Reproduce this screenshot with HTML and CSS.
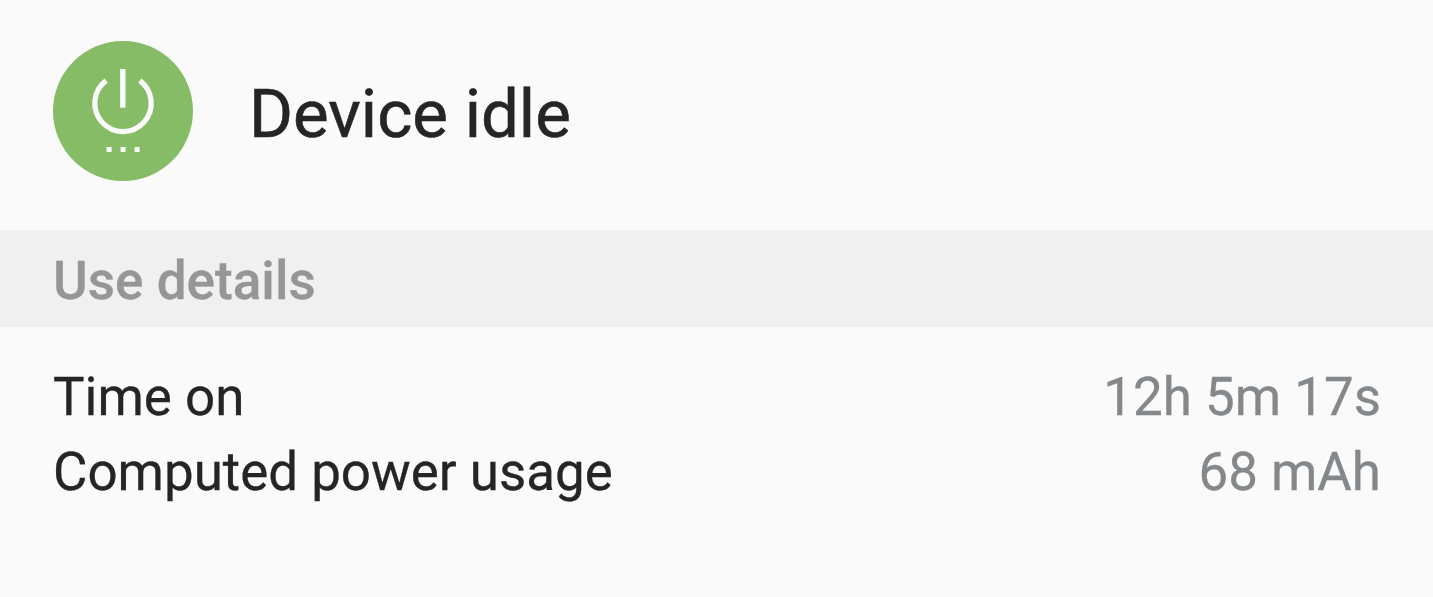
FILE: index.html
```
<!DOCTYPE html>
<html lang="en">
<head>
    <meta charset="UTF-8">
    <title>Device idle</title>
    <link rel="stylesheet" href="styles.css">
</head>
<body>
    <div class="header">
        <svg class="app-icon" viewBox="0 0 140 140">
            <circle cx="70" cy="70" r="70" fill="#87bc67"/>
            <path d="M53.2 39.7 A28.2 28.2 0 1 0 86.8 39.7" fill="none" stroke="#fafafa" stroke-width="5.2"/>
            <path d="M69.8 28 V66.7" stroke="#fafafa" stroke-width="5.4"/>
            <path d="M53.6 106h5v5h-5zM67.6 106h5v5h-5zM81.6 106h5v5h-5z" fill="#fafafa"/>
        </svg>
        <h1>Device idle</h1>
    </div>

    <h2 class="section-title">Use details</h2>

    <div class="details">
        <div class="row">
            <span>Time on</span>
            <span class="value">12h 5m 17s</span>
        </div>
        <div class="row">
            <span>Computed power usage</span>
            <span class="value">68 mAh</span>
        </div>
    </div>
</body>
</html>
```
FILE: styles.css
```
body {
    margin: 0;
    background: #fafafa;
    font-family: Roboto, sans-serif;
    color: #252525;
    -webkit-text-stroke: 0.3px;
}

.header {
    display: flex;
    align-items: center;
    box-sizing: border-box;
    height: 230px;
    padding: 0 53px 8px;
}

.app-icon {
    width: 140px;
    height: 140px;
    margin-right: 56px;
}

.header h1 {
    margin: 6px 0 0;
    font-size: 67.2px;
    font-weight: 400;
    line-height: 80px;
    -webkit-text-stroke: 0.6px;
}

/* Grey section bar */
.section-title {
    margin: 0;
    padding: 3px 53px 0;
    box-sizing: border-box;
    height: 97px;
    background: #f0f0f0;
    color: #969696;
    font-size: 53.1px;
    font-weight: 500;
    line-height: 97px;
}

.details {
    padding: 33px 52px 0 53px;
}

.row {
    display: flex;
    justify-content: space-between;
    font-size: 52.9px;
    line-height: 75px;
}

.value {
    color: #84888b;
}
```
